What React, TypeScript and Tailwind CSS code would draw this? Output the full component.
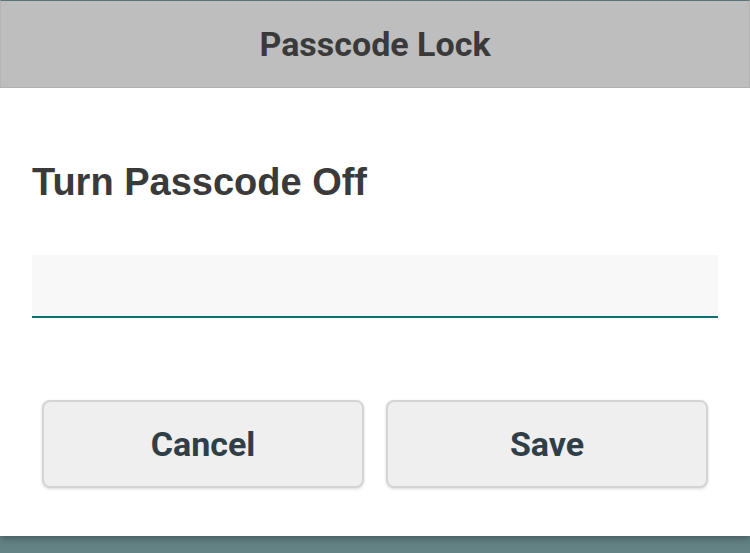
export default function App() {
  return (
    <div className="w-[750px] h-[553px] bg-[#648385] flex flex-col overflow-hidden">
      <div className="bg-white h-[536px] flex flex-col shadow-[0_2px_8px_rgba(0,0,0,0.35)]">
        <div className="h-[88px] bg-[#bebebe] border-t border-t-[#587474] border-x border-x-[#b4b4b4] border-b border-b-[#b0b0b0] flex items-center justify-center">
          <span className="text-[34px] font-bold text-[#3a3a3a] font-['Roboto',sans-serif] leading-none">Passcode Lock</span>
        </div>
        <div className="px-[32px] flex flex-col">
          <div className="mt-[74px] text-[38px] font-bold text-[#3a3a3a] font-['Liberation_Sans',Arial,sans-serif] leading-[40px]">Turn Passcode Off</div>
          <div className="mt-[53px] h-[63px] bg-[#f8f8f8] border-b-2 border-b-[#0b706f]"></div>
          <div className="mt-[82px] flex gap-[22px] px-[10px]">
            <button className="w-[322px] h-[88px] rounded-[8px] bg-[#efefef] border-2 border-[#d4d4d4] shadow-[0_1px_3px_rgba(0,0,0,0.15)] text-[34px] font-bold text-[#2f3e47] font-['Roboto',sans-serif]">Cancel</button>
            <button className="w-[322px] h-[88px] rounded-[8px] bg-[#efefef] border-2 border-[#d4d4d4] shadow-[0_1px_3px_rgba(0,0,0,0.15)] text-[34px] font-bold text-[#2f3e47] font-['Roboto',sans-serif]">Save</button>
          </div>
        </div>
      </div>
    </div>
  );
}
